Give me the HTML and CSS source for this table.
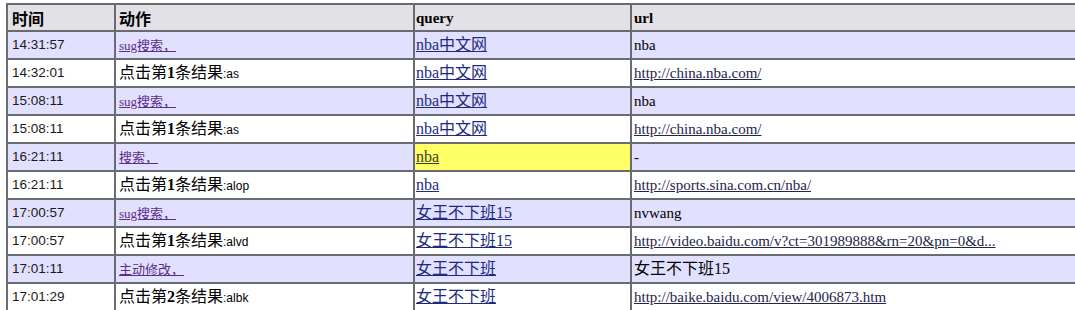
FILE: index.html
```html
<!DOCTYPE html>
<html lang="zh-CN">
<head>
<meta charset="utf-8">
<title>log</title>
<link rel="stylesheet" href="styles.css">
</head>
<body>
<table class="log">
  <colgroup>
    <col class="c-time"><col class="c-act"><col class="c-query"><col class="c-url">
  </colgroup>
  <thead>
    <tr class="head">
      <th>时间</th><th>动作</th><th class="latin q">query</th><th class="latin u">url</th>
    </tr>
  </thead>
  <tbody>
    <tr class="odd">
      <td class="time">14:31:57</td>
      <td class="act"><a class="act-link" href="#">sug搜索，</a></td>
      <td class="query"><a href="#">nba中文网</a></td>
      <td class="url"><span class="latin">nba</span></td>
    </tr>
    <tr>
      <td class="time">14:32:01</td>
      <td class="act">点击第<b class="num">1</b>条结果<span class="code">:as</span></td>
      <td class="query"><a href="#">nba中文网</a></td>
      <td class="url"><a class="url-link" href="#">http://china.nba.com/</a></td>
    </tr>
    <tr class="odd">
      <td class="time">15:08:11</td>
      <td class="act"><a class="act-link" href="#">sug搜索，</a></td>
      <td class="query"><a href="#">nba中文网</a></td>
      <td class="url"><span class="latin">nba</span></td>
    </tr>
    <tr>
      <td class="time">15:08:11</td>
      <td class="act">点击第<b class="num">1</b>条结果<span class="code">:as</span></td>
      <td class="query"><a href="#">nba中文网</a></td>
      <td class="url"><a class="url-link" href="#">http://china.nba.com/</a></td>
    </tr>
    <tr class="odd">
      <td class="time">16:21:11</td>
      <td class="act"><a class="act-link" href="#">搜索，</a></td>
      <td class="query hl"><a href="#">nba</a></td>
      <td class="url"><span class="latin">-</span></td>
    </tr>
    <tr>
      <td class="time">16:21:11</td>
      <td class="act">点击第<b class="num">1</b>条结果<span class="code">:alop</span></td>
      <td class="query"><a href="#">nba</a></td>
      <td class="url"><a class="url-link" href="#">http://sports.sina.com.cn/nba/</a></td>
    </tr>
    <tr class="odd">
      <td class="time">17:00:57</td>
      <td class="act"><a class="act-link" href="#">sug搜索，</a></td>
      <td class="query"><a href="#">女王不下班15</a></td>
      <td class="url"><span class="latin">nvwang</span></td>
    </tr>
    <tr>
      <td class="time">17:00:57</td>
      <td class="act">点击第<b class="num">1</b>条结果<span class="code">:alvd</span></td>
      <td class="query"><a href="#">女王不下班15</a></td>
      <td class="url"><a class="url-link" href="#">http://video.baidu.com/v?ct=301989888&amp;rn=20&amp;pn=0&amp;d...</a></td>
    </tr>
    <tr class="odd">
      <td class="time">17:01:11</td>
      <td class="act"><a class="act-link" href="#">主动修改，</a></td>
      <td class="query"><a href="#">女王不下班</a></td>
      <td class="url">女王不下班15</td>
    </tr>
    <tr>
      <td class="time">17:01:29</td>
      <td class="act">点击第<b class="num">2</b>条结果<span class="code">:albk</span></td>
      <td class="query"><a href="#">女王不下班</a></td>
      <td class="url"><a class="url-link" href="#">http://baike.baidu.com/view/4006873.htm</a></td>
    </tr>
  </tbody>
</table>
</body>
</html>
```
FILE: styles.css
```css
html, body {
  margin: 0;
  padding: 0;
  background: #ffffff;
  overflow: hidden;
}

body {
  padding: 3px 0 0 6px;
  font-family: "Liberation Serif", "Noto Sans CJK SC", serif;
  font-size: 16px;
  color: #000000;
}

.log {
  border-collapse: collapse;
  table-layout: fixed;
  width: 1140px;
  border: 2px solid #6a6a72;
}

.c-time { width: 108px; }
.c-act { width: 299px; }
.c-query { width: 217px; }
.c-url { width: 516px; }

.log th,
.log td {
  border: 2px solid #6a6a72;
  padding: 0 2px 0 3px;
  text-align: left;
  vertical-align: middle;
  white-space: nowrap;
  overflow: hidden;
  line-height: 18px;
}

.log th:first-child,
.log td.time {
  padding-left: 4px;
}

.log th.q,
.log td.query {
  padding-left: 1px;
}

.log th.u,
.log td.url {
  padding-left: 2px;
}

.head {
  height: 27px;
  background: #e3e1e6;
}

.head th {
  font-weight: bold;
  font-size: 16px;
  font-family: "Noto Sans CJK SC", sans-serif;
}

.head th.latin {
  font-family: "Liberation Serif", serif;
  font-size: 15px;
}

tbody tr {
  height: 28px;
  background: #ffffff;
}

tbody tr.odd {
  background: #e1e0ff;
}

.time {
  font-family: "Liberation Sans", sans-serif;
  font-size: 13.5px;
  color: #1a1a1a;
}

.act {
  font-size: 16px;
}

.num {
  font-family: "Liberation Serif", serif;
  font-weight: bold;
}

.code {
  font-family: "Liberation Sans", sans-serif;
  font-size: 12px;
}

.act-link {
  font-size: 13px;
  color: #5b2e86;
}

.query {
  font-size: 16px;
}

.query a {
  color: #1c2a80;
}

.query.hl {
  background: #ffff66;
}

.query.hl a {
  color: #3a3a2a;
}

.url {
  font-size: 16px;
}

.url .latin {
  font-size: 15px;
}

.url-link {
  font-size: 15px;
  color: #24244a;
}
```
